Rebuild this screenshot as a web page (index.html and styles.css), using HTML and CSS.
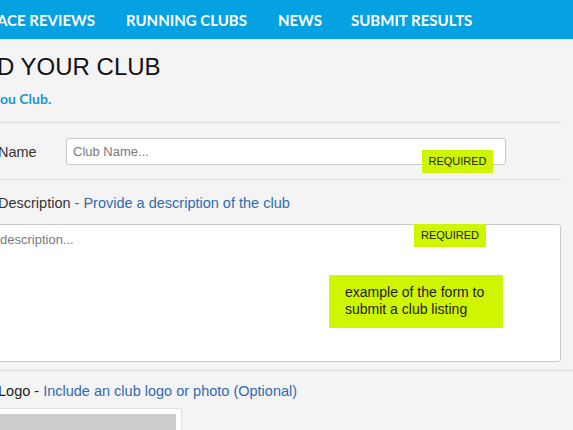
FILE: index.html
```html
<!DOCTYPE html>
<html lang="en">
<head>
<meta charset="utf-8">
<title>Add your club</title>
<link rel="stylesheet" href="styles.css">
</head>
<body>
<nav class="topnav">
  <a class="nav-item first" href="#">ACE REVIEWS</a>
  <a class="nav-item" href="#">RUNNING CLUBS</a>
  <a class="nav-item" href="#">NEWS</a>
  <a class="nav-item last" href="#">SUBMIT RESULTS</a>
</nav>
<main class="page">
  <header class="intro">
    <h1 class="title">D YOUR CLUB</h1>
    <p class="subtitle">ou Club.</p>
  </header>
  <section class="row row-name">
    <label class="label name-label">Name</label>
    <div class="field">
      <input class="text-input" type="text" placeholder="Club Name...">
      <span class="badge badge-name">REQUIRED</span>
    </div>
  </section>
  <section class="row row-desc">
    <p class="label desc-label">Description <span class="hint">- Provide a description of the club</span></p>
    <div class="area-wrap">
      <textarea class="text-area" placeholder="description..."></textarea>
      <span class="badge badge-desc">REQUIRED</span>
      <div class="note">example of the form to submit a club listing</div>
    </div>
  </section>
  <section class="row row-logo">
    <p class="label logo-label">Logo <span class="dash">-</span> <span class="hint">Include an club logo or photo (Optional)</span></p>
    <div class="logo-box"><div class="logo-preview"></div></div>
  </section>
</main>
</body>
</html>
```
FILE: styles.css
```css
* { box-sizing: border-box; }
html, body { margin: 0; padding: 0; }
body {
  background: #f4f4f4;
  font-family: "Liberation Sans", Arial, sans-serif;
  color: #333;
  overflow: hidden;
  height: 430px;
}
.topnav {
  height: 39px;
  background: #05a2e3;
  display: flex;
  align-items: center;
  gap: 31px;
  padding-top: 1px;
}
.nav-item {
  font-family: Lato, "Open Sans", sans-serif;
  font-weight: 700;
  font-size: 15px;
  color: #fff;
  text-decoration: none;
}
.nav-item.first { margin-left: -3px; }
.nav-item.last { margin-left: -2px; }
.page { width: 573px; }
.intro { padding-bottom: 15px; }
.title {
  margin: 13px 0 0 -3px;
  font-size: 24px;
  line-height: 30px;
  font-weight: 400;
  color: #111;
}
.subtitle {
  margin: 9px 0 0;
  font-family: Lato, "Open Sans", sans-serif;
  font-weight: 700;
  font-size: 14px;
  line-height: 16px;
  color: #1a96d3;
}
.row {
  border-top: 1px solid #dddddd;
}
.row-name {
  width: 561px;
  display: flex;
  align-items: flex-start;
  padding: 15px 0 14px;
}
.label {
  margin: 0;
  font-size: 14.5px;
  line-height: 18px;
  color: #333;
}
.name-label {
  margin-left: -2px;
  padding-top: 5px;
  flex: 0 0 68px;
}
.field { position: relative; }
.text-input {
  display: block;
  width: 440px;
  height: 27px;
  border: 1px solid #c9c9c9;
  border-radius: 3px;
  background: #fff;
  padding: 0 6px;
  font-family: "Liberation Sans", Arial, sans-serif;
  font-size: 13px;
  color: #333;
  outline: none;
}
.text-input::placeholder, .text-area::placeholder { color: #7a7a7a; }
.badge {
  position: absolute;
  background: #cff500;
  color: #222;
  font-size: 11px;
  line-height: 23px;
  height: 23px;
  text-align: center;
}
.badge-name { left: 356px; top: 12px; width: 71px; }
.row-desc {
  width: 561px;
  padding: 14px 0 8px;
}
.desc-label { margin-left: -2px; }
.hint { color: #2f6bb2; }
.area-wrap {
  position: relative;
  margin: 12px 0 0 -9px;
}
.text-area {
  display: block;
  width: 570px;
  height: 138px;
  border: 1px solid #c9c9c9;
  border-radius: 3px;
  background: #fff;
  padding: 7px 8px;
  resize: none;
  font-family: "Liberation Sans", Arial, sans-serif;
  font-size: 13px;
  outline: none;
}
.badge-desc { left: 423px; top: 0; width: 72px; }
.note {
  position: absolute;
  left: 338px;
  top: 51px;
  width: 174px;
  height: 53px;
  background: #cff500;
  color: #222;
  font-size: 14px;
  line-height: 17px;
  padding: 9px 14px 0 16px;
}
.row-logo {
  padding-top: 11px;
}
.logo-label { margin-left: -2px; color: #222; }
.logo-box {
  margin: 8px 0 0 -10px;
  width: 192px;
  height: 40px;
  background: #fff;
  border: 1px solid #e2e2e2;
  border-radius: 3px;
  padding: 5px 5px 0 5px;
}
.logo-preview {
  background: #cccccc;
  height: 40px;
}
```
